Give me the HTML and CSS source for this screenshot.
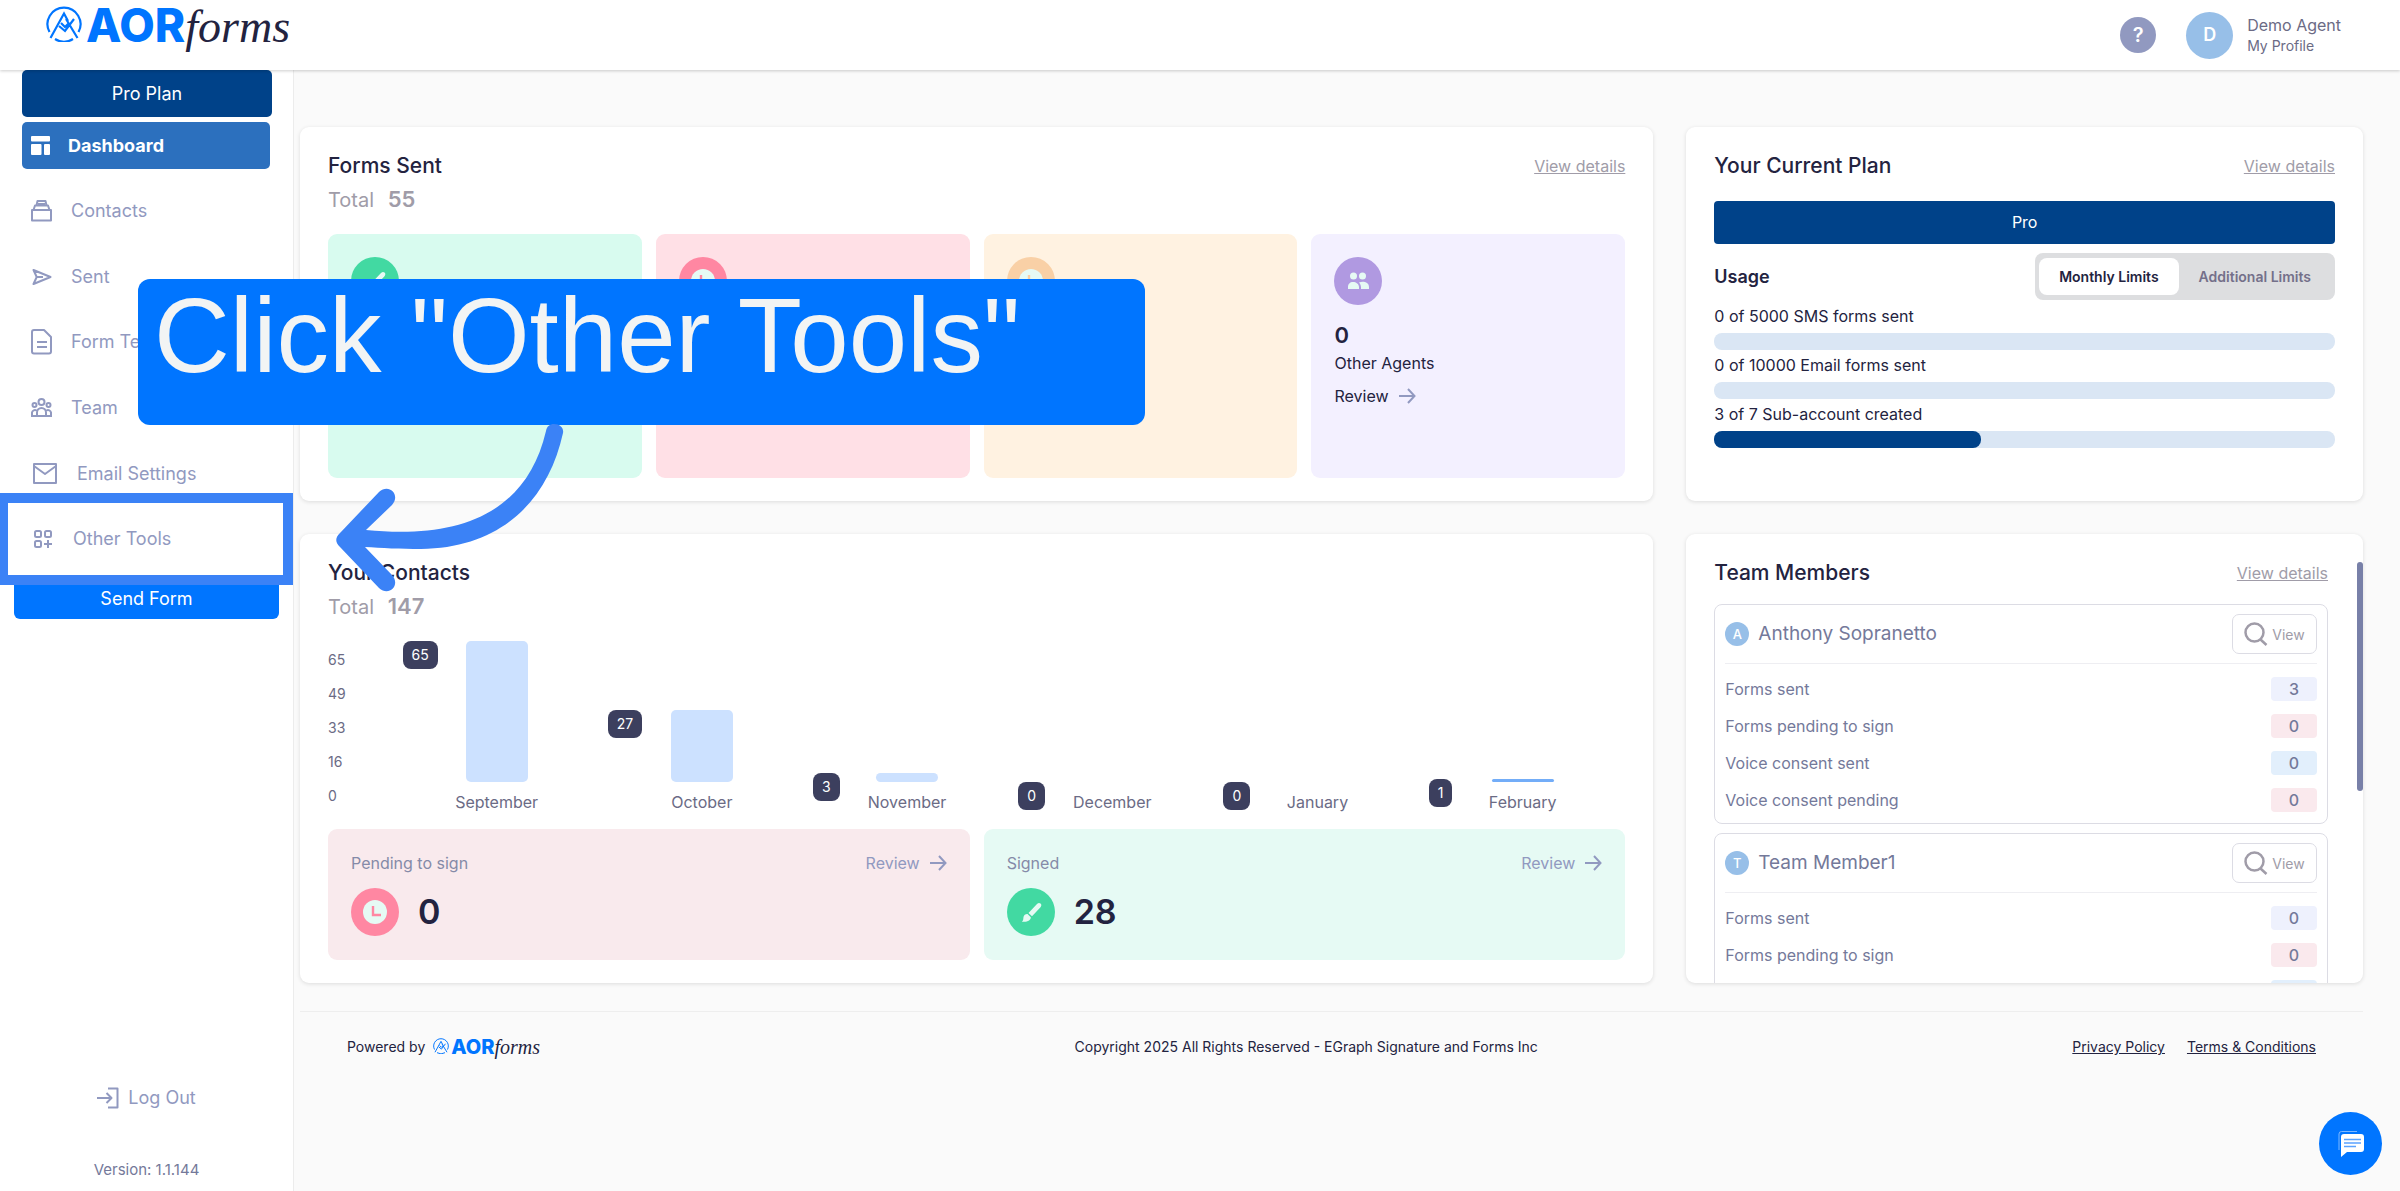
FILE: index.html
```html
<!DOCTYPE html>
<html lang="en">
<head>
  <meta charset="UTF-8" />
  <title>AOR Forms - Dashboard</title>
  <meta name="viewport" content="width=device-width, initial-scale=1.0" />
  <link rel="stylesheet" href="styles.css">
</head>
<body>
  <!-- shared icons -->
  <svg class="sprite" width="0" height="0">
    <symbol id="logo-mark" viewBox="0 0 36 36">
      <g fill="none" stroke="#0075ff" stroke-width="2.2">
        <path d="M3.5 26A16.5 16.5 0 1 1 32.5 26M9 33a17 17 0 0 0 18 0" />
        <path d="M4.500 32L18 7.500l4 7.500M31.500 32L20 13M13 20l6 5L28 13M15 17l4 4 4-4" />
      </g>
    </symbol>
    <symbol id="arrow" viewBox="0 0 18 18">
      <path d="M1 9h15M10 2l6.500 7-6.500 7" fill="none" stroke="currentColor" stroke-width="2" />
    </symbol>
    <symbol id="brush" viewBox="0 0 48 48">
      <path d="M33.500 15.500c1.200 1 1 2.500 0 3.800l-8.500 9-3.500-3.300 8.500-9c1.200-1.200 2.400-1.400 3.500-.5zM20.500 26l3.300 3.200c.2 3-3.500 5.300-9 4.500 1.800-1.200 1.300-2.500 1.700-4.700.4-2 2.200-3.200 4-3z" fill="#e6faf4" />
    </symbol>
    <symbol id="clock" viewBox="0 0 48 48">
      <circle cx="24" cy="24" r="12" fill="#e6faf4" />
      <path d="M22 18v9h8" fill="none" stroke="currentColor" stroke-width="2.400" />
    </symbol>
    <symbol id="search" viewBox="0 0 24 24">
      <path d="M10.500 1.500a9 9 0 1 1 0 18 9 9 0 0 1 0-18zM16.500 17.500l6 5.500" fill="none" stroke="currentColor" stroke-width="2.500" />
    </symbol>
  </svg>

  <header class="topbar">
    <a class="logo" href="#"><svg class="logo-mark"><use href="#logo-mark" /></svg><b>AOR</b><i>forms</i></a>
    <div class="topbar-right">
      <button class="help" aria-label="Help">?</button>
      <span class="avatar">D</span>
      <div class="profile">
        <div>Demo Agent</div>
        <a href="#">My Profile</a>
      </div>
    </div>
  </header>

  <div class="layout">
    <aside class="sidebar">
      <button class="plan-btn">Pro Plan</button>
      <nav class="nav">
        <a class="active" href="#">
          <svg width="19" height="19" viewBox="0 0 19 19" fill="#fff"><rect width="19" height="5.500" rx="1" /><rect y="8" width="10.500" height="11" rx="1" /><rect x="13" y="8" width="6" height="11" rx="1" /></svg>
          Dashboard
        </a>
        <a href="#">
          <svg width="22" height="22" viewBox="0 0 22 22"><path d="M1 10h19v10.500H1zM2.500 10l1.500-4.500h13l1.500 4.500M5.500 5.500L6.500 1h8l1 4.500M7 4h7" /></svg>
          Contacts
        </a>
        <a href="#">
          <svg width="22" height="22" viewBox="0 0 22 22"><path d="M2.500 4l17 7-17 7 3.200-7zM6 11h6" /></svg>
          Sent
        </a>
        <a href="#">
          <svg width="22" height="26" viewBox="0 0 22 26"><path d="M3 1h10l7 7v14.500a2 2 0 0 1-2 2H3a2 2 0 0 1-2-2V3a2 2 0 0 1 2-2zM6 13h10M6 18h10" /></svg>
          Form Templates
        </a>
        <a href="#">
          <svg width="22" height="22" viewBox="0 0 22 22"><circle cx="10.500" cy="5" r="3" /><circle cx="3.500" cy="8" r="2" /><circle cx="17.500" cy="8" r="2" /><path d="M6 19v-3.500a4.500 4.500 0 0 1 9 0V19M1 19v-3.500a3 3 0 0 1 4.500-2M20 19v-3.500a3 3 0 0 0-4.500-2M0 19h21" /></svg>
          Team
        </a>
        <a href="#">
          <svg width="28" height="24" viewBox="0 0 28 24"><path d="M3 2h22v19H3zM3 4l11 8 11-8" /></svg>
          Email Settings
        </a>
        <a href="#">
          <svg width="24" height="24" viewBox="0 0 24 24"><rect x="4" y="4" width="6" height="6" rx="1.500" /><rect x="14" y="4" width="6" height="6" rx="1.500" /><rect x="4" y="14" width="6" height="6" rx="1.500" /><path d="M17 13v8M13 17h8" /></svg>
          Other Tools
        </a>
      </nav>
      <button class="send-btn">Send Form</button>
      <div class="sidebar-bottom">
        <a class="logout" href="#">
          <svg width="22" height="22" viewBox="0 0 22 22"><path d="M0 11h14M9.500 6l5 5-5 5M11 1.500h9.500v19H11" /></svg>
          Log Out
        </a>
        <div class="version">Version: 1.1.144</div>
      </div>
    </aside>

    <main class="main">
      <div class="cards">
        <section class="card">
          <div class="card-head">
            <h2>Forms Sent</h2>
            <a href="#">View details</a>
          </div>
          <div class="total">Total <b>55</b></div>
          <div class="tiles">
            <div class="tile green"><svg class="round bg-green"><use href="#brush" /></svg></div>
            <div class="tile pink"><svg class="round bg-pink"><use href="#clock" /></svg></div>
            <div class="tile orange"><svg class="round bg-orange"><use href="#clock" /></svg></div>
            <div class="tile purple">
              <svg class="round bg-purple" viewBox="0 0 48 48" fill="#e6faf4"><circle cx="19.500" cy="19" r="3.500" /><circle cx="28.500" cy="19" r="3.500" /><path d="M14 32v-2c0-3 2-5 5-5s6 2 6 5v2zM27 32c.2-3-.5-5-2-6.500 4-1.500 10-.5 10 4.500v2z" /></svg>
              <strong>0</strong>
              <span>Other Agents</span>
              <a href="#">Review <svg class="arrow"><use href="#arrow" /></svg></a>
            </div>
          </div>
        </section>

        <section class="card">
          <div class="card-head">
            <h2>Your Current Plan</h2>
            <a href="#">View details</a>
          </div>
          <div class="plan-name">Pro</div>
          <div class="usage-head">
            <h3>Usage</h3>
            <div class="toggle">
              <button class="on">Monthly Limits</button>
              <button>Additional Limits</button>
            </div>
          </div>
          <div class="usage">0 of 5000 SMS forms sent<div class="bar"><div style="width:0%"></div></div></div>
          <div class="usage">0 of 10000 Email forms sent<div class="bar"><div style="width:0%"></div></div></div>
          <div class="usage">3 of 7 Sub-account created<div class="bar"><div style="width:43%"></div></div></div>
        </section>

        <section class="card">
          <div class="card-head">
            <h2>Your Contacts</h2>
          </div>
          <div class="total">Total <b>147</b></div>
          <div class="chart">
            <div class="axis"><span>65</span><span>49</span><span>33</span><span>16</span><span>0</span></div>
            <div class="col"><div class="col-bar" style="height:141px"><em>65</em></div><span>September</span></div>
            <div class="col"><div class="col-bar" style="height:72px"><em>27</em></div><span>October</span></div>
            <div class="col"><div class="col-bar" style="height:9px"><em>3</em></div><span>November</span></div>
            <div class="col"><div class="col-bar" style="height:0px"><em>0</em></div><span>December</span></div>
            <div class="col"><div class="col-bar" style="height:0px"><em>0</em></div><span>January</span></div>
            <div class="col"><div class="col-bar current" style="height:3px"><em>1</em></div><span>February</span></div>
          </div>
          <div class="status">
            <div class="status-box pending">
              <div class="status-head">Pending to sign <a href="#">Review <svg class="arrow"><use href="#arrow" /></svg></a></div>
              <div class="status-num"><svg class="round bg-pink"><use href="#clock" /></svg>0</div>
            </div>
            <div class="status-box signed">
              <div class="status-head">Signed <a href="#">Review <svg class="arrow"><use href="#arrow" /></svg></a></div>
              <div class="status-num"><svg class="round bg-green"><use href="#brush" /></svg>28</div>
            </div>
          </div>
        </section>

        <section class="card team">
          <div class="team-scroll">
            <div class="card-head">
              <h2>Team Members</h2>
              <a href="#">View details</a>
            </div>
            <div class="member">
              <div class="member-head">
                <span class="avatar small">A</span>Anthony Sopranetto
                <button><svg><use href="#search" /></svg>View</button>
              </div>
              <div class="member-row">Forms sent<b class="p1">3</b></div>
              <div class="member-row">Forms pending to sign<b class="p2">0</b></div>
              <div class="member-row">Voice consent sent<b class="p3">0</b></div>
              <div class="member-row">Voice consent pending<b class="p2">0</b></div>
            </div>
            <div class="member">
              <div class="member-head">
                <span class="avatar small">T</span>Team Member1
                <button><svg><use href="#search" /></svg>View</button>
              </div>
              <div class="member-row">Forms sent<b class="p1">0</b></div>
              <div class="member-row">Forms pending to sign<b class="p2">0</b></div>
              <div class="member-row">Voice consent sent<b class="p3">0</b></div>
              <div class="member-row">Voice consent pending<b class="p2">0</b></div>
            </div>
          </div>
          <div class="scroll-thumb"></div>
        </section>
      </div>

      <footer class="footer">
        <div class="powered">Powered by <a class="logo logo-small" href="#"><svg class="logo-mark"><use href="#logo-mark" /></svg><b>AOR</b><i>forms</i></a></div>
        <div class="copyright">Copyright 2025 All Rights Reserved - EGraph Signature and Forms Inc</div>
        <div class="legal"><a href="#">Privacy Policy</a><a href="#">Terms &amp; Conditions</a></div>
      </footer>
    </main>
  </div>

  <button class="chat" aria-label="Chat">
    <svg width="28" height="28" viewBox="0 0 28 28"><path d="M2 20V4a2.500 2.500 0 0 1 2.500-2.500H20" fill="none" stroke="#7db8ff" stroke-width="1" /><path d="M7 4h17a3 3 0 0 1 3 3v12a3 3 0 0 1-3 3H10l-6 5V7a3 3 0 0 1 3-3z" fill="#fff" /><path d="M7 9.500h17M7 13h17M7 16.500h12" stroke="#5ba3ff" stroke-width="1.500" /></svg>
  </button>

  <!-- guide step -->
  <div class="guide-box"></div>
  <div class="guide-text">Click "Other Tools"</div>
  <svg class="guide-arrow" width="240" height="180" viewBox="0 0 240 180">
    <path d="M218 3c6 0 10 4 9 9C212 80 165 127 85 128c-20 0-40-1-56-2l27 28c9 10-3 22-13 13L4 126c-5-5-5-9 0-14l39-41c10-9 22 3 13 13l-26 25c90 9 160-14 180-99 1-5 4-7 8-7z" />
  </svg>
</body>
</html>
```
FILE: styles.css
```css
* {
  box-sizing: border-box;
}
body {
  margin: 0;
  min-height: 100vh;
  display: flex;
  flex-direction: column;
  font-family: Inter, "Open Sans", sans-serif;
  font-size: 16px;
  line-height: 20px;
  color: #232340;
  background: #fafafa;
}
h2, h3 {
  margin: 0;
  font-weight: 600;
}
h2 {
  font-size: 21px;
  line-height: 26px;
  font-weight: 500;
}
h3 {
  font-size: 18px;
}
button {
  font-family: inherit;
  border: none;
  padding: 0;
  cursor: pointer;
}
a {
  color: inherit;
}
.sprite {
  position: absolute;
}

/* top bar */
.topbar {
  height: 70px;
  padding: 0 59px 0 46px;
  display: flex;
  justify-content: space-between;
  align-items: center;
  background: #fff;
  box-shadow: 0 1px 3px rgba(0, 0, 0, 0.2);
  z-index: 2;
}
.logo {
  display: flex;
  align-items: baseline;
  text-decoration: none;
  line-height: 66px;
  align-self: flex-start;
  margin-top: -8px;
}
.logo-mark {
  width: 36px;
  height: 36px;
  margin-right: 4px;
}
.logo b {
  font-size: 46px;
  font-weight: 800;
  color: #0075ff;
}
.logo i {
  font-family: "Liberation Serif", serif;
  font-size: 46px;
  color: #232340;
}
.topbar-right {
  display: flex;
  align-items: center;
}
.help {
  width: 36px;
  height: 36px;
  border-radius: 50%;
  background: #9199c0;
  color: #fff;
  font-size: 20px;
  font-weight: 600;
  margin-right: 30px;
}
.avatar {
  width: 47px;
  height: 47px;
  border-radius: 50%;
  background: #97bfe8;
  color: #fff;
  font-size: 18px;
  font-weight: 600;
  display: flex;
  align-items: center;
  justify-content: center;
}
.profile {
  margin-left: 14px;
  color: #6b6b85;
}
.profile a {
  font-size: 14px;
  text-decoration: none;
}

/* sidebar */
.layout {
  flex: 1;
  display: flex;
}
.sidebar {
  width: 294px;
  flex: none;
  display: flex;
  flex-direction: column;
  background: #fff;
  border-right: 1px solid #ececec;
}
.plan-btn, .send-btn {
  color: #fff;
  font-size: 18px;
}
.plan-btn {
  height: 47px;
  margin: 0 21px 5px 22px;
  border-radius: 5px;
  background: #004289;
}
.send-btn {
  height: 41px;
  margin: 15px 14px 0;
  border-radius: 6px;
  background: #0075ff;
}
.nav {
  display: flex;
  flex-direction: column;
  justify-content: space-between;
  height: 441px;
  padding: 0 23px 0 22px;
}
.nav a {
  display: flex;
  align-items: center;
  gap: 18px;
  height: 47px;
  padding: 0 9px;
  border-radius: 5px;
  font-size: 18px;
  color: #9199c0;
  text-decoration: none;
}
.nav svg, .logout svg {
  fill: none;
  stroke: #9199c0;
  stroke-width: 2;
  stroke-linejoin: round;
}
.nav .active {
  background: #2c70be;
  color: #fff;
  font-weight: 700;
}
.nav .active svg {
  fill: #fff;
  stroke: none;
}
.sidebar-bottom {
  margin-top: auto;
  padding-bottom: 11px;
  text-align: center;
}
.logout {
  display: flex;
  align-items: center;
  justify-content: center;
  gap: 9px;
  margin-bottom: 51px;
  font-size: 18px;
  color: #9199c0;
  text-decoration: none;
}
.version {
  color: #74799a;
  font-size: 15px;
}

/* cards */
.main {
  flex: 1;
  padding: 57px 37px 0 6px;
}
.cards {
  display: grid;
  grid-template-columns: 2fr 1fr;
  gap: 33px;
}
.card {
  background: #fff;
  border-radius: 9px;
  padding: 26px 28px 23px;
  box-shadow: 0 1px 4px rgba(0, 0, 0, 0.12);
}
.card-head {
  display: flex;
  justify-content: space-between;
  align-items: center;
}
.card-head a {
  color: #a09ca8;
}
.total {
  margin-top: 7px;
  font-size: 20px;
  line-height: 26px;
  color: #a09ca8;
}
.total b {
  margin-left: 8px;
  font-size: 22px;
  font-weight: 600;
}
.tiles {
  display: grid;
  grid-template-columns: repeat(4, 1fr);
  gap: 14px;
  margin-top: 21px;
}
.tile {
  min-height: 244px;
  padding: 23px;
  border-radius: 9px;
  display: flex;
  flex-direction: column;
}
.green { background: #d8fbef; }
.pink { background: #ffe0e6; }
.orange { background: #fff2e1; }
.purple { background: #f3f0ff; }
.round {
  width: 48px;
  height: 48px;
  border-radius: 50%;
}
.bg-green { background: #42d9a2; }
.bg-pink { background: #ff87a2; color: #ff87a2; }
.bg-orange { background: #f9d0a6; color: #f9d0a6; }
.bg-purple { background: #b099e1; }
.tile strong {
  margin-top: 16px;
  font-size: 22px;
  line-height: 28px;
  font-weight: 600;
}
.tile span {
  margin-top: 4px;
}
.tile a {
  margin-top: 13px;
  display: flex;
  align-items: center;
  gap: 9px;
  color: #232340;
  text-decoration: none;
}
.arrow {
  width: 18px;
  height: 18px;
  color: #9199c0;
}

/* current plan */
.plan-name {
  margin-top: 22px;
  height: 43px;
  line-height: 43px;
  border-radius: 4px;
  background: #004289;
  color: #fff;
  text-align: center;
}
.usage-head {
  display: flex;
  justify-content: space-between;
  align-items: center;
  margin: 9px 0 6px;
}
.toggle {
  display: flex;
  padding: 5px 4px;
  border-radius: 8px;
  background: #dddee0;
}
.toggle button {
  height: 37px;
  padding: 0 20px;
  border-radius: 8px;
  font-size: 14px;
  font-weight: 600;
  background: none;
  color: #74708a;
}
.toggle .on {
  background: #fff;
  color: #232340;
}
.usage {
  margin-bottom: 5px;
}
.bar {
  height: 17px;
  margin-top: 7px;
  border-radius: 8px;
  background: #dae6f4;
}
.bar div {
  height: 100%;
  border-radius: 8px;
  background: #004289;
}

/* contacts chart */
.chart {
  display: flex;
  margin-top: 21px;
}
.axis {
  width: 66px;
  display: flex;
  flex-direction: column;
  gap: 14px;
  padding-top: 9px;
  padding-bottom: 4px;
  font-size: 14px;
  color: #6b6b85;
}
.col {
  flex: 1;
  display: flex;
  flex-direction: column;
  align-items: center;
  justify-content: flex-end;
  gap: 10px;
  color: #6b6b85;
}
.col-bar {
  position: relative;
  width: 62px;
  border-radius: 5px;
  background: #cce1ff;
}
.col-bar.current {
  background: #73adf8;
}
.col-bar em {
  position: absolute;
  top: 0;
  left: -63px;
  height: 28px;
  padding: 0 9px;
  border-radius: 8px;
  background: #3c3f5e;
  color: #fff;
  font-size: 14px;
  line-height: 28px;
  font-style: normal;
}
.status {
  display: grid;
  grid-template-columns: 1fr 1fr;
  gap: 14px;
  margin-top: 17px;
}
.status-box {
  height: 131px;
  padding: 24px 23px;
  border-radius: 9px;
}
.pending { background: #f9eaed; }
.signed { background: #e6faf4; }
.status-head {
  display: flex;
  justify-content: space-between;
  color: #858aa8;
}
.status-head a {
  display: flex;
  align-items: center;
  gap: 9px;
  color: #9199c0;
  text-decoration: none;
}
.status-num {
  display: flex;
  align-items: center;
  gap: 19px;
  margin-top: 15px;
  font-size: 34px;
  font-weight: 600;
}

/* team members */
.team {
  position: relative;
  padding: 0;
}
.team-scroll {
  position: absolute;
  inset: 0;
  overflow: hidden;
  border-radius: 9px;
  padding: 26px 35px 0 28px;
}
.scroll-thumb {
  position: absolute;
  top: 28px;
  right: 0;
  width: 6px;
  height: 229px;
  border-radius: 3px;
  background: #7880a8;
}
.member {
  margin-top: 9px;
  padding: 9px 10px 1px;
  border: 1px solid #dcdce4;
  border-radius: 8px;
  color: #74799a;
}
.card-head + .member {
  margin-top: 18px;
}
.member-head {
  display: flex;
  align-items: center;
  gap: 9px;
  padding-bottom: 9px;
  margin-bottom: 13px;
  border-bottom: 1px solid #eeeef2;
  font-size: 19px;
}
.avatar.small {
  width: 24px;
  height: 24px;
  font-size: 13px;
  font-weight: 500;
}
.member-head button {
  margin-left: auto;
  width: 85px;
  height: 40px;
  display: flex;
  align-items: center;
  justify-content: center;
  gap: 4px;
  border: 1px solid #dcdce4;
  border-radius: 7px;
  background: #fff;
  color: #a09ca8;
  font-size: 14px;
}
.member-head svg {
  width: 24px;
  height: 24px;
}
.member-row {
  display: flex;
  justify-content: space-between;
  align-items: center;
  height: 24px;
  margin-bottom: 13px;
}
.member-row b {
  width: 46px;
  line-height: 24px;
  border-radius: 4px;
  text-align: center;
  font-weight: 500;
}
.member-row:last-child {
  margin-bottom: 10px;
}
.p1 { background: #eef1fd; }
.p2 { background: #fae9ed; }
.p3 { background: #e2effc; }

/* footer */
.footer {
  display: flex;
  justify-content: space-between;
  align-items: center;
  margin-top: 28px;
  padding: 20px 47px;
  border-top: 1px solid #eeeeee;
  font-size: 14px;
}
.powered {
  display: flex;
  align-items: center;
  gap: 8px;
}
.logo-small {
  margin: 0;
  line-height: 30px;
}
.logo-small .logo-mark {
  width: 16px;
  height: 16px;
  margin-right: 2px;
}
.logo-small b, .logo-small i {
  font-size: 20px;
}
.legal {
  display: flex;
  justify-content: flex-end;
  gap: 22px;
}

.chat {
  position: fixed;
  right: 18px;
  bottom: 16px;
  width: 63px;
  height: 63px;
  border-radius: 50%;
  background: #0075ff;
}
.chat svg {
  display: block;
  margin: 0 auto;
}

/* guide overlay */
.guide-box, .guide-text, .guide-arrow {
  position: absolute;
  z-index: 5;
}
.guide-box {
  top: 493px;
  left: 0;
  width: 293px;
  height: 92px;
  border: 10px solid #3b82f6;
  border-left-width: 8px;
}
.guide-text {
  top: 279px;
  left: 138px;
  width: 1007px;
  height: 146px;
  padding-left: 16px;
  border-radius: 12px;
  background: #0075ff;
  color: #f2f4f4;
  font-family: "Liberation Sans", Arial, sans-serif;
  font-size: 105px;
  line-height: 113px;
}
.guide-arrow {
  top: 421px;
  left: 336px;
  fill: #3b82f6;
}
```
